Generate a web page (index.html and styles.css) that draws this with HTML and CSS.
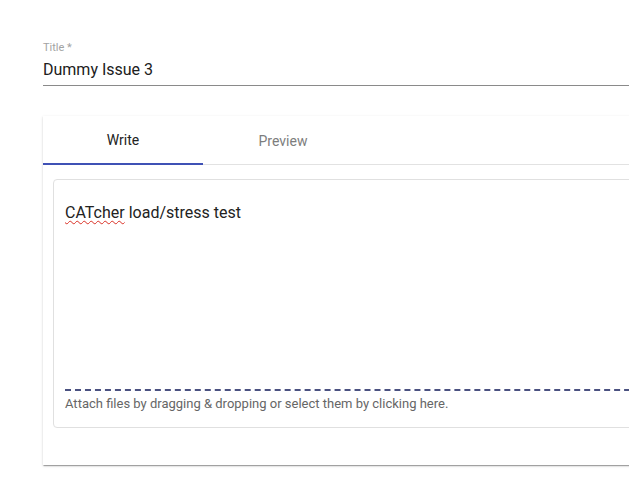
FILE: index.html
```html
<!DOCTYPE html>
<html>
<head>
<meta charset="utf-8">
<link rel="stylesheet" href="styles.css">
</head>
<body>
<div class="page">
  <div class="field">
    <div class="label">Title *</div>
    <div class="value">Dummy Issue 3</div>
  </div>
  <div class="card">
    <div class="tabs">
      <div class="tab active">Write</div>
      <div class="tab">Preview</div>
    </div>
    <div class="body">
      <div class="editor">
        <div class="text"><span class="spell">CATcher</span> load/stress test</div>
        <div class="drop">Attach files by dragging &amp; dropping or select them by clicking here.</div>
      </div>
    </div>
  </div>
</div>
</body>
</html>
```
FILE: styles.css
```css
html, body {
  margin: 0;
  padding: 0;
  background: #fff;
  font-family: Roboto, "Liberation Sans", sans-serif;
}
body {
  overflow: hidden;
  height: 482px;
}
.page {
  padding: 41px 0 0 43px;
  width: 660px;
}
.field {
  border-bottom: 1px solid #8a8a8a;
  padding-bottom: 4px;
}
.label {
  font-size: 11px;
  color: #a3a3a3;
  line-height: 14px;
}
.value {
  font-size: 16px;
  color: #202020;
  line-height: 22px;
  margin-top: 4px;
}
.card {
  margin-top: 30px;
  box-shadow: 0 2px 1px -1px rgba(0,0,0,0.2), 0 1px 1px 0 rgba(0,0,0,0.14), 0 1px 3px 0 rgba(0,0,0,0.12);
  background: #fff;
  padding-bottom: 37px;
}
.tabs {
  display: flex;
  border-bottom: 1px solid #e2e2e2;
}
.tab {
  width: 160px;
  height: 48px;
  display: flex;
  align-items: center;
  justify-content: center;
  font-size: 14px;
  color: #7d7d7d;
  box-sizing: border-box;
  padding-top: 1px;
}
.tab.active {
  color: #222;
  border-bottom: 2px solid #3f51b5;
  margin-bottom: -1px;
  height: 49px;
  padding-bottom: 1px;
}
.body {
  padding: 14px 0 0 10px;
}
.editor {
  border: 1px solid #e0e0e0;
  border-radius: 4px;
  padding: 22px 12px 15px 11px;
  height: 210px;
  display: flex;
  flex-direction: column;
  justify-content: space-between;
}
.text {
  font-size: 16px;
  color: #222;
  line-height: 22px;
}
.spell {
  text-decoration: underline wavy #d93025;
  text-decoration-thickness: 1px;
  text-underline-offset: 2px;
}
.drop {
  border-top: 2px dashed #4a5180;
  padding-top: 4px;
  font-size: 13px;
  color: #666;
  line-height: 17px;
}
```
